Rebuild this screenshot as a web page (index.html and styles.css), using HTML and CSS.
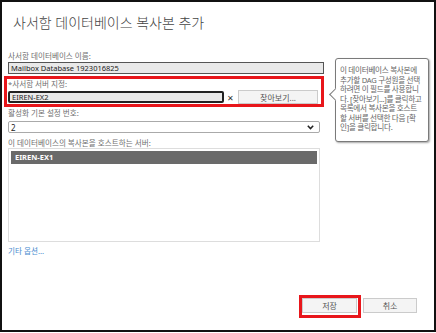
FILE: index.html
```html
<!DOCTYPE html>
<html>
<head>
    <title>사서함 데이터베이스 복사본 추가</title>
    <meta name="viewport" content="width=device-width, initial-scale=1">
    <link rel="stylesheet" href="styles.css">
</head>
<body>
    <div class="dialog">
        <h1 class="title">사서함 데이터베이스 복사본 추가</h1>

        <div class="content">
            <div class="form">
                <label class="field-label">사서함 데이터베이스 이름:</label>
                <div class="textbox readonly">Mailbox Database 1923016825</div>

                <div class="highlight">
                    <label class="field-label">*사서함 서버 지정:</label>
                    <div class="server-row">
                        <div class="textbox active">EIREN-EX2</div>
                        <span class="clear">✕</span>
                        <button class="btn browse">찾아보기...</button>
                    </div>
                </div>

                <label class="field-label">활성화 기본 설정 번호:</label>
                <div class="select">
                    <span>2</span>
                    <svg width="7" height="5" viewBox="0 0 7 5"><path d="M0.8 0.8 L3.5 3.6 L6.2 0.8" fill="none" stroke="#222" stroke-width="1.5"/></svg>
                </div>

                <label class="field-label">이 데이터베이스의 복사본을 호스트하는 서버:</label>
                <div class="listbox">
                    <div class="list-item selected">EIREN-EX1</div>
                </div>

                <a class="more" href="#">기타 옵션...</a>
            </div>

            <div class="tooltip">
                이 데이터베이스 복사본에<br>
                추가할 DAG 구성원을 선택<br>
                하려면 이 필드를 사용합니<br>
                다. [찾아보기...]를 클릭하고<br>
                목록에서 복사본을 호스트<br>
                할 서버를 선택한 다음 [확<br>
                인]을 클릭합니다.
            </div>
        </div>

        <div class="footer">
            <span class="highlight-btn"><button class="btn">저장</button></span>
            <button class="btn">취소</button>
        </div>
    </div>
</body>
</html>
```

FILE: styles.css
```css
* {
    margin: 0;
    padding: 0;
    box-sizing: border-box;
}

body {
    font-family: 'Noto Sans', 'Noto Sans CJK KR', sans-serif;
    background: white;
    width: 436px;
    height: 333px;
}

.dialog {
    width: 436px;
    height: 332px;
    border: 2px solid #111;
    display: flex;
    flex-direction: column;
}

.title {
    font-size: 14px;
    font-weight: 300;
    color: #444;
    line-height: 20px;
    padding: 11px 0 0 11px;
}

.content {
    display: flex;
    align-items: flex-start;
    padding-left: 6px;
}

.form {
    width: 312px;
    display: flex;
    flex-direction: column;
}

.field-label {
    display: block;
    font-size: 7.6px;
    line-height: 10px;
    color: #707070;
    margin-top: 5px;
}

.form > .field-label:first-child {
    margin-top: 18px;
}

.textbox {
    height: 12px;
    font-size: 7.5px;
    line-height: 10px;
    color: #222;
    padding-left: 2px;
    background: #e9e9e9;
    border: 1px solid #555;
    margin-top: 1px;
}

.textbox.readonly {
    margin-right: -4px;
}

.highlight {
    border: 3px solid #e8161b;
    margin: 2px -4px 0;
    padding: 0 3px 0 1px;
}

.highlight .field-label {
    margin-top: 0;
}

.server-row {
    display: flex;
    align-items: center;
    height: 14px;
    margin-top: 1px;
}

.textbox.active {
    width: 216px;
    margin-top: 0;
    border: 2px solid #222;
    border-radius: 2px;
    line-height: 8px;
}

.clear {
    font-size: 8px;
    color: #333;
    width: 13px;
    text-align: center;
}

.btn {
    font-family: inherit;
    font-size: 8px;
    color: #555;
    background: #f4f4f4;
    border: 1px solid #cbcbcb;
    height: 15px;
    width: 55px;
    cursor: pointer;
}

.browse {
    width: 80px;
    height: 14px;
    margin-left: auto;
}

.highlight + .field-label {
    margin-top: 1px;
}

.select {
    display: flex;
    align-items: center;
    justify-content: space-between;
    height: 12px;
    margin-top: 3px;
    padding: 0 5px 0 2px;
    border: 1px solid #aaa;
    border-radius: 2px;
    font-size: 8px;
    color: #222;
}

.listbox {
    height: 94px;
    border: 1px solid #ddd;
    padding: 2px;
}

.list-item {
    height: 13px;
    font-size: 7.5px;
    line-height: 13px;
    padding-left: 4px;
}

.list-item.selected {
    background: #6a6a6a;
    color: white;
    font-weight: bold;
}

.more {
    font-size: 7.6px;
    line-height: 10px;
    margin-top: 4px;
    color: #4b8ccf;
    text-decoration: none;
}

.tooltip {
    position: relative;
    width: 94px;
    margin: 25px 0 0 15px;
    padding: 7px 3px 8px 4px;
    border: 1px solid #7a7a7a;
    border-radius: 3px;
    box-shadow: 1px 1px 2px rgba(0,0,0,0.35);
    font-size: 7.6px;
    line-height: 9.5px;
    letter-spacing: -0.3px;
    color: #666;
    background: white;
    white-space: nowrap;
}

.tooltip::before {
    content: '';
    position: absolute;
    left: -5px;
    top: 31px;
    width: 8px;
    height: 8px;
    background: white;
    border-left: 1px solid #7a7a7a;
    border-bottom: 1px solid #7a7a7a;
    transform: rotate(45deg);
}

.footer {
    margin-top: auto;
    display: flex;
    justify-content: flex-end;
    align-items: flex-start;
    gap: 2px;
    padding: 0 17px 12px 0;
}

.highlight-btn {
    border: 3px solid #e8161b;
    padding: 0 1px 2px 0;
    display: flex;
}

.footer > .btn {
    width: 54px;
    margin-top: 3px;
}
```
